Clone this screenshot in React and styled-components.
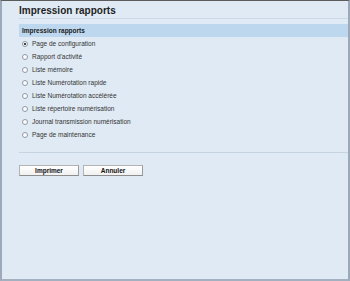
import React from 'react';
import styled, {createGlobalStyle} from "styled-components";

const GlobalStyle = createGlobalStyle`
  html, body {
    margin: 0;
    padding: 0;
    width: 350px;
    height: 281px;
    overflow: hidden;
    background: #e0eaf4;
  }
`

const reports = [
    'Page de configuration',
    "Rapport d'activité",
    'Liste mémoire',
    'Liste Numérotation rapide',
    'Liste Numérotation accélérée',
    'Liste répertoire numérisation',
    'Journal transmission numérisation',
    'Page de maintenance',
]

const App = () => {
    return (<Frame>
        <GlobalStyle/>
        <Title>Impression rapports</Title>
        <Panel>
            <PanelHeader>Impression rapports</PanelHeader>
            {reports.map((label, i) => (
                <Row key={label}>
                    <Radio checked={i === 0}/>
                    <span>{label}</span>
                </Row>
            ))}
            <Divider/>
            <Buttons>
                <Button>Imprimer</Button>
                <Button>Annuler</Button>
            </Buttons>
        </Panel>
    </Frame>);
};

const Frame = styled.div`
  box-sizing: border-box;
  width: 350px;
  height: 281px;
  background: #e0eaf4;
  border-top: 1px solid #5c5c5c;
  border-left: 2px solid #9ba9b9;
  border-right: 2px solid #9ba9b9;
  border-bottom: 2px solid #a3b0bf;
  font-family: "Liberation Sans", Arial, sans-serif;
`

const Title = styled.div`
  margin-left: 17px;
  padding-top: 2px;
  height: 15px;
  line-height: 15px;
  font-size: 10px;
  font-weight: bold;
  color: #1e1e1e;
  border-bottom: 1px solid #cbd8e5;
`

const Panel = styled.div`
  margin: 5px 0 0 17px;
`

const PanelHeader = styled.div`
  height: 13px;
  line-height: 13px;
  padding-left: 3px;
  background: #bdd7ee;
  font-size: 6.5px;
  font-weight: bold;
  color: #1a1a1a;
`

const Row = styled.div`
  display: flex;
  align-items: center;
  gap: 4px;
  height: 13px;
  padding-left: 3px;
  font-size: 6.5px;
  color: #333;
`

const Radio = styled.span`
  box-sizing: border-box;
  width: 6px;
  height: 6px;
  border-radius: 50%;
  border: 1px solid #8f9aa5;
  background: ${p => p.checked
          ? 'radial-gradient(circle, #444 0 1.2px, #fff 1.6px)'
          : '#fbfcfd'};
`

const Divider = styled.div`
  margin-top: 11px;
  height: 1px;
  background: #c6d4e2;
`

const Buttons = styled.div`
  display: flex;
  gap: 4px;
  margin-top: 12px;
`

const Button = styled.button`
  box-sizing: border-box;
  width: 60px;
  height: 11px;
  padding: 0;
  background: linear-gradient(#ffffff, #f1f1f1);
  border: 1px solid #b3b3b3;
  border-bottom-color: #8d8d8d;
  border-right-color: #9a9a9a;
  font-family: "Liberation Sans", Arial, sans-serif;
  font-size: 6.5px;
  font-weight: bold;
  line-height: 9px;
  color: #111;
`

export default App;
